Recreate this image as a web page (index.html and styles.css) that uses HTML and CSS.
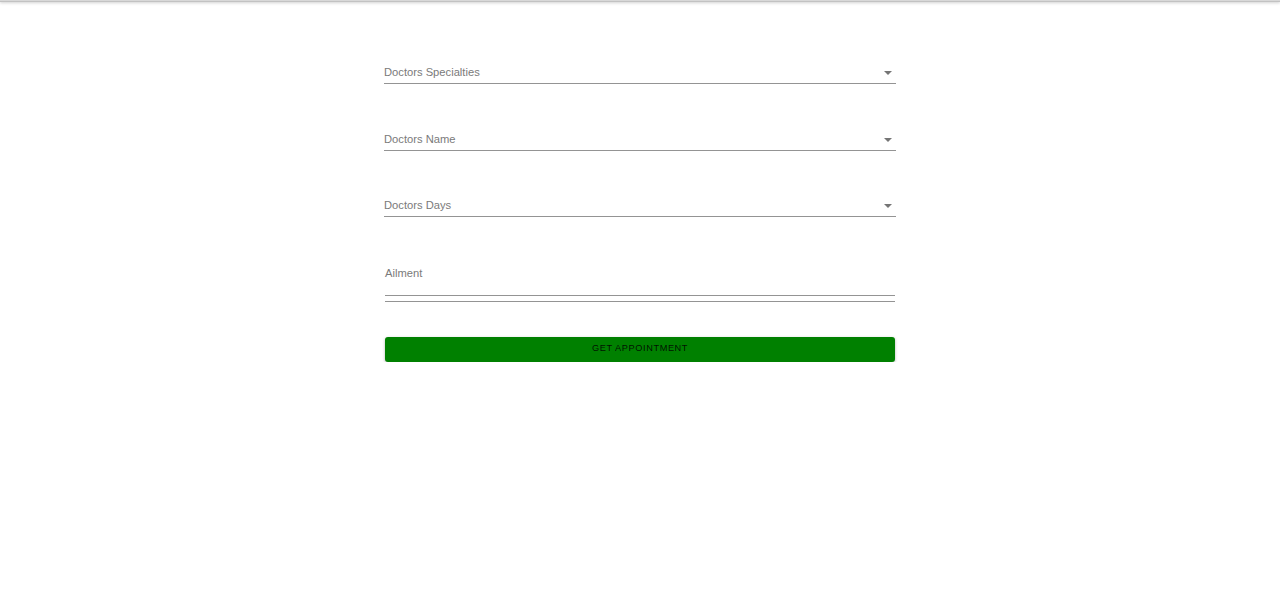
FILE: index.html
```html
<!DOCTYPE html>
<html>
<head>
<meta charset="utf-8">
<link rel="stylesheet" href="styles.css">
</head>
<body>
<div class="topbar"></div>
<main class="form">
  <div class="select">
    <span class="label">Doctors Specialties</span>
    <svg class="arrow" viewBox="0 0 10 5" width="8" height="4"><path d="M0 0 L5 5 L10 0 Z" fill="rgba(0,0,0,0.54)"/></svg>
  </div>
  <div class="select">
    <span class="label">Doctors Name</span>
    <svg class="arrow" viewBox="0 0 10 5" width="8" height="4"><path d="M0 0 L5 5 L10 0 Z" fill="rgba(0,0,0,0.54)"/></svg>
  </div>
  <div class="select">
    <span class="label">Doctors Days</span>
    <svg class="arrow" viewBox="0 0 10 5" width="8" height="4"><path d="M0 0 L5 5 L10 0 Z" fill="rgba(0,0,0,0.54)"/></svg>
  </div>
  <div class="textfield">
    <span class="label">Ailment</span>
    <div class="input"></div>
    <div class="line"></div>
  </div>
  <button class="btn">GET APPOINTMENT</button>
</main>
</body>
</html>
```
FILE: styles.css
```css
html, body {
  margin: 0;
  padding: 0;
  background: #fff;
  font-family: "Liberation Sans", Arial, sans-serif;
}
.topbar {
  height: 2px;
  background: linear-gradient(#d8d8d8 50%, #c2c2c2 50%);
  box-shadow: 0 1px 3px rgba(0,0,0,0.22);
}
.form {
  width: 512px;
  margin: 0 auto;
  padding-top: 61px;
  display: flex;
  flex-direction: column;
}
.select {
  height: 20px;
  border-bottom: 1px solid #949494;
  display: flex;
  align-items: center;
  justify-content: space-between;
  margin-bottom: 45px;
}
.select:first-child {
  margin-bottom: 46px;
}
.label {
  font-size: 11.2px;
  color: #7a7a7a;
  line-height: 16px;
}
.select .label {
  margin-bottom: 2px;
}
.arrow {
  margin-right: 4px;
}
.textfield {
  margin: 0 1px;
  display: flex;
  flex-direction: column;
  padding-top: 3px;
}
.input {
  height: 14px;
  border-bottom: 1px solid #949494;
}
.line {
  margin-top: 5px;
  height: 1px;
  background: #949494;
}
.btn {
  margin: 35px 1px 0;
  height: 25px;
  border: none;
  border-radius: 3px;
  background: #008000;
  color: rgba(0,0,0,0.87);
  font-family: "Liberation Sans", Arial, sans-serif;
  font-size: 9.2px;
  letter-spacing: 0.6px;
  padding: 0 0 3px;
  box-shadow: 0 1px 3px rgba(0,0,0,0.3);
}
```
